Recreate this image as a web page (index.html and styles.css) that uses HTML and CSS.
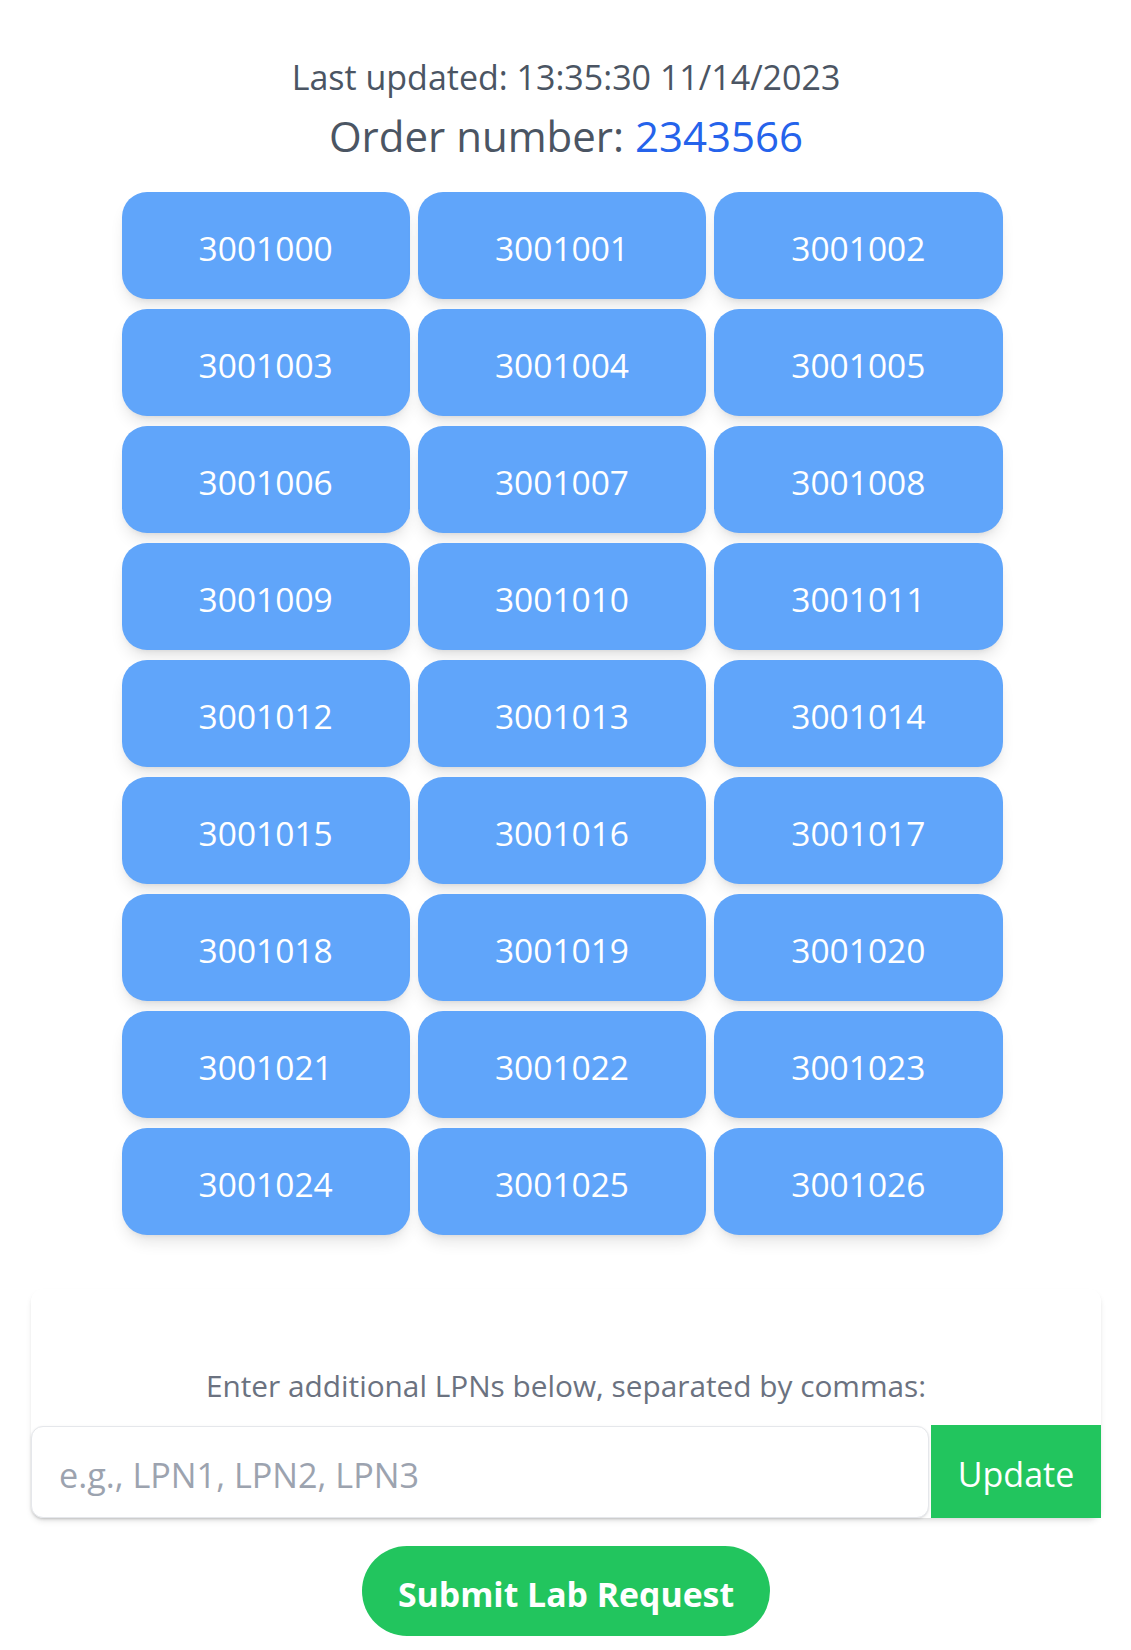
FILE: index.html
```html
<!DOCTYPE html>
<html lang="en">
<head>
<meta charset="utf-8">
<title>Order LPNs</title>
<link rel="stylesheet" href="styles.css">
</head>
<body>
<main class="page">
  <header class="header">
    <p class="updated">Last updated: 13:35:30 11/14/2023</p>
    <h1 class="order">Order number: <span class="order-num">2343566</span></h1>
  </header>
  <div class="lpn-grid">
    <button class="lpn">3001000</button>
    <button class="lpn">3001001</button>
    <button class="lpn">3001002</button>
    <button class="lpn">3001003</button>
    <button class="lpn">3001004</button>
    <button class="lpn">3001005</button>
    <button class="lpn">3001006</button>
    <button class="lpn">3001007</button>
    <button class="lpn">3001008</button>
    <button class="lpn">3001009</button>
    <button class="lpn">3001010</button>
    <button class="lpn">3001011</button>
    <button class="lpn">3001012</button>
    <button class="lpn">3001013</button>
    <button class="lpn">3001014</button>
    <button class="lpn">3001015</button>
    <button class="lpn">3001016</button>
    <button class="lpn">3001017</button>
    <button class="lpn">3001018</button>
    <button class="lpn">3001019</button>
    <button class="lpn">3001020</button>
    <button class="lpn">3001021</button>
    <button class="lpn">3001022</button>
    <button class="lpn">3001023</button>
    <button class="lpn">3001024</button>
    <button class="lpn">3001025</button>
    <button class="lpn">3001026</button>
  </div>
  <section class="card">
    <p class="card-label">Enter additional LPNs below, separated by commas:</p>
    <div class="input-row">
      <input class="lpn-input" type="text" placeholder="e.g., LPN1, LPN2, LPN3">
      <button class="update-btn">Update</button>
    </div>
  </section>
  <div class="submit-wrap">
    <button class="submit-btn">Submit Lab Request</button>
  </div>
</main>
</body>
</html>
```
FILE: styles.css
```css
* { box-sizing: border-box; }
html, body { margin: 0; padding: 0; background: #ffffff; }
body {
  font-family: "Open Sans", "Noto Sans", sans-serif;
  color: #4b5563;
}
.page {
  padding: 52px 30px 14px 31px;
}
.header { text-align: center; }
.updated {
  margin: 0;
  font-size: 34px;
  line-height: 50px;
  color: #4b5563;
}
.order {
  margin: 4px 0 0;
  font-size: 42px;
  line-height: 60px;
  font-weight: 400;
  color: #4b5563;
}
.order-num { color: #2563eb; }

.lpn-grid {
  width: 889px;
  margin: 26px auto 0;
  padding-right: 8px;
  display: grid;
  grid-template-columns: repeat(3, 1fr);
  column-gap: 8px;
  row-gap: 10px;
}
.lpn {
  height: 107px;
  padding: 4px 0 0;
  border: 0;
  border-radius: 25px;
  background: #60a5fa;
  color: #ffffff;
  font-family: "Open Sans", "Noto Sans", sans-serif;
  font-size: 33.5px;
  box-shadow: 0 10px 15px -3px rgba(0,0,0,0.1), 0 4px 6px -4px rgba(0,0,0,0.1);
}

.card {
  margin-top: 54px;
  background: #ffffff;
  border-radius: 12px;
  box-shadow: 0 4px 6px -1px rgba(0,0,0,0.1), 0 2px 4px -2px rgba(0,0,0,0.1);
  padding-top: 77px;
}
.card-label {
  margin: 0 0 19px;
  text-align: center;
  font-size: 29.8px;
  line-height: 40px;
  color: #6b7280;
}
.input-row {
  display: flex;
  align-items: flex-end;
  gap: 2px;
}
.lpn-input {
  flex: 1;
  height: 92px;
  border: 1px solid #e5e7eb;
  border-radius: 12px;
  padding: 5px 0 0 27px;
  font-family: "Open Sans", "Noto Sans", sans-serif;
  font-size: 34.2px;
  color: #374151;
  background: #ffffff;
  box-shadow: 0 1px 3px 0 rgba(0,0,0,0.1), 0 1px 2px -1px rgba(0,0,0,0.1);
  outline: none;
}
.lpn-input::placeholder { color: #9ca3af; }
.update-btn {
  width: 170px;
  height: 93px;
  border: 0;
  background: #22c55e;
  color: #ffffff;
  font-family: "Open Sans", "Noto Sans", sans-serif;
  font-size: 34px;
  padding: 5px 0 0;
}
.submit-wrap {
  margin-top: 28px;
  display: flex;
  justify-content: center;
}
.submit-btn {
  width: 408px;
  height: 90px;
  border: 0;
  border-radius: 45px;
  background: #22c55e;
  color: #ffffff;
  font-family: "Open Sans", "Noto Sans", sans-serif;
  font-weight: 700;
  font-size: 33.8px;
  padding: 5px 0 0;
}
```
